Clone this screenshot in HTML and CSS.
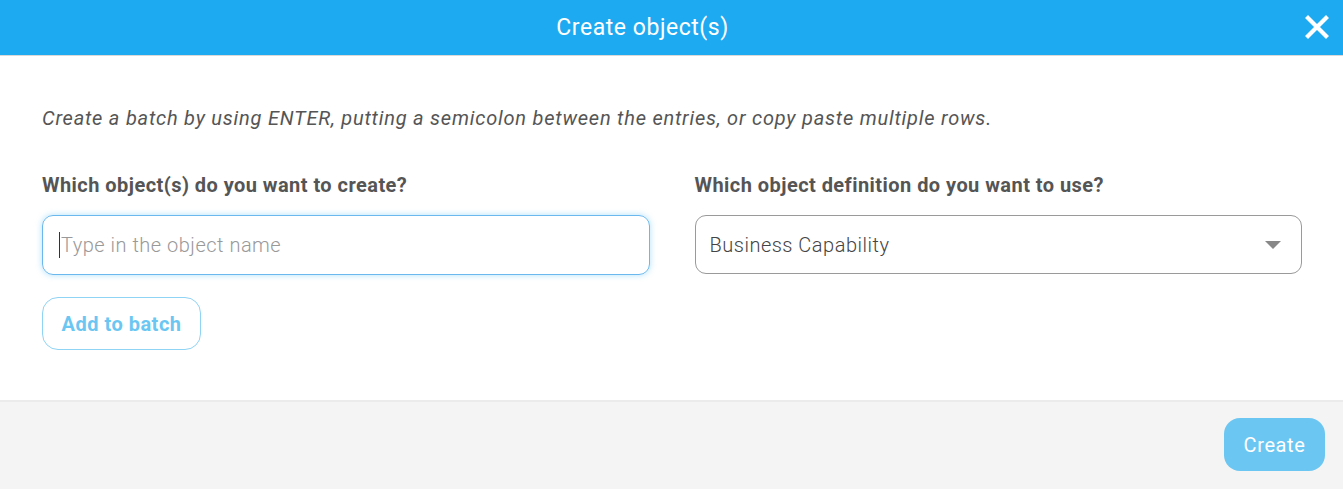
FILE: index.html
```html
<!DOCTYPE html>
<html>
<head>
<meta charset="utf-8">
<link rel="stylesheet" href="styles.css">
</head>
<body>
<div class="modal">
  <header class="modal-header">
    <h1 class="modal-title">Create object(s)</h1>
    <button class="close-btn" aria-label="Close">
      <svg width="24" height="24" viewBox="0 0 24 24"><path d="M3 3 L21 21 M21 3 L3 21" stroke="#fff" stroke-width="4.2" stroke-linecap="square"/></svg>
    </button>
  </header>
  <main class="modal-body">
    <p class="hint">Create a batch by using ENTER, putting a semicolon between the entries, or copy paste multiple rows.</p>
    <div class="columns">
      <div class="col">
        <label class="label">Which object(s) do you want to create?</label>
        <div class="input focused"><span class="caret"></span><span class="placeholder">Type in the object name</span></div>
        <button class="btn-outline">Add to batch</button>
      </div>
      <div class="col">
        <label class="label">Which object definition do you want to use?</label>
        <div class="input select"><span class="value">Business Capability</span><span class="arrow"></span></div>
      </div>
    </div>
  </main>
  <footer class="modal-footer">
    <button class="btn-primary">Create</button>
  </footer>
</div>
</body>
</html>
```

FILE: styles.css
```css
* { box-sizing: border-box; }
html, body { margin: 0; padding: 0; }
body {
  font-family: Roboto, "Noto Sans", sans-serif;
  background: #fff;
  width: 1343px;
  height: 489px;
  overflow: hidden;
}
.modal { display: flex; flex-direction: column; height: 489px; }
.modal-header {
  height: 56px;
  background: #1eaaf1;
  border-bottom: 1px solid #d9d9d9;
  display: flex;
  align-items: center;
  justify-content: center;
  padding-right: 58px;
  position: relative;
}
.modal-title {
  margin: 0;
  color: #fff;
  font-weight: 400;
  font-size: 23px;
  letter-spacing: 0.55px;
}
.close-btn {
  position: absolute;
  right: 14px;
  top: 15px;
  background: none;
  border: 0;
  padding: 0;
  width: 24px;
  height: 24px;
  display: flex;
}
.modal-body {
  flex: 1;
  padding: 44px 41px 0 42px;
}
.hint {
  margin: 0;
  font-style: italic;
  font-size: 20px;
  letter-spacing: 0.78px;
  color: #555;
  line-height: 36px;
}
.columns {
  display: flex;
  gap: 45px;
  margin-top: 32px;
}
.col { flex: 1; display: flex; flex-direction: column; align-items: flex-start; }
.label {
  font-weight: 700;
  font-size: 20px;
  letter-spacing: 0.45px;
  color: #555;
  line-height: 34px;
  margin-bottom: 13px;
}
.input {
  width: 100%;
  height: 60px;
  border: 1px solid #9a9a9a;
  border-radius: 11px;
  display: flex;
  align-items: center;
  padding: 0 14px 0 17px;
  font-size: 20px;
  font-weight: 300;
  letter-spacing: 0.5px;
}
.input.focused {
  border-color: #6ab8ee;
  box-shadow: 0 0 6px rgba(30,170,241,0.35);
  padding-left: 16px;
}
.caret { width: 1px; height: 26px; background: #333; margin-right: 1px; }
.placeholder { color: #999; }
.select { justify-content: space-between; height: 59px; padding-left: 14px; }
.value { color: #444; }
.arrow {
  width: 0; height: 0;
  border-left: 8px solid transparent;
  border-right: 8px solid transparent;
  border-top: 8px solid #888;
  margin-right: 6px;
}
.btn-outline {
  margin-top: 22px;
  height: 53px;
  width: 159px;
  border: 1px solid #8fd3f5;
  background: #fff;
  border-radius: 16px;
  color: #6cc6f2;
  font-family: Roboto, sans-serif;
  font-weight: 700;
  font-size: 20px;
  letter-spacing: 0.5px;
  padding: 0;
}
.modal-footer {
  height: 89px;
  background: #f4f4f4;
  border-top: 2px solid #ebebeb;
  display: flex;
  justify-content: flex-end;
  align-items: flex-start;
  padding: 16px 18px 0 0;
}
.btn-primary {
  width: 101px;
  height: 53px;
  background: #6cc6f2;
  border: 0;
  border-radius: 16px;
  color: #fff;
  font-family: Roboto, sans-serif;
  font-size: 20px;
  letter-spacing: 0.6px;
  font-weight: 400;
  padding: 0;
}
```
